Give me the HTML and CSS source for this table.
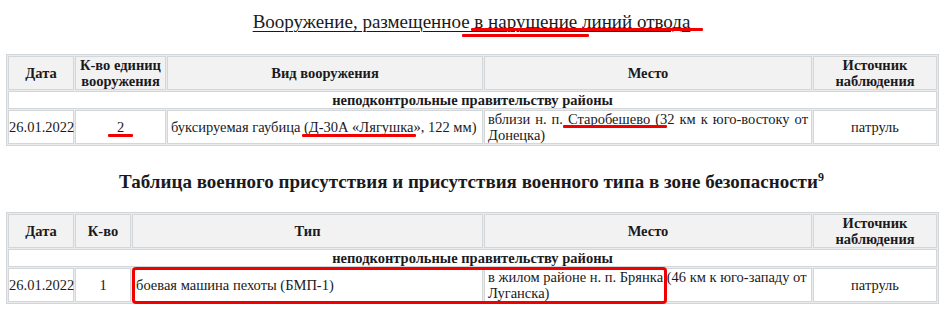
FILE: index.html
```html
<!DOCTYPE html>
<html lang="ru">
<head>
<meta charset="utf-8">
<link rel="stylesheet" href="styles.css">
</head>
<body>
<div class="page">
  <h2 class="title-1"><span class="ul">Вооружение, размещенное в нарушение линий отвода </span></h2>

  <table class="report report-1">
    <tr class="head">
      <th class="c-date">Дата</th>
      <th class="c-qty-1">К-во единиц вооружения</th>
      <th class="c-type-1">Вид вооружения</th>
      <th class="c-place">Место</th>
      <th class="c-src">Источник наблюдения</th>
    </tr>
    <tr class="sub">
      <th colspan="5">неподконтрольные правительству районы</th>
    </tr>
    <tr class="data">
      <td class="date">26.01.2022</td>
      <td class="center">2</td>
      <td>буксируемая гаубица (Д-30А «Лягушка», 122 мм)</td>
      <td class="justify">вблизи н. п. Старобешево (32 км к юго-востоку от Донецка)</td>
      <td class="center">патруль</td>
    </tr>
  </table>

  <h2 class="title-2">Таблица военного присутствия и присутствия военного типа в зоне безопасности<sup>9</sup></h2>

  <table class="report report-2">
    <tr class="head">
      <th class="c-date">Дата</th>
      <th class="c-qty-2">К-во</th>
      <th class="c-type-2">Тип</th>
      <th class="c-place">Место</th>
      <th class="c-src">Источник наблюдения</th>
    </tr>
    <tr class="sub">
      <th colspan="5">неподконтрольные правительству районы</th>
    </tr>
    <tr class="data">
      <td class="date">26.01.2022</td>
      <td class="center">1</td>
      <td>боевая машина пехоты (БМП-1)</td>
      <td>в жилом районе н. п. Брянка (46 км к юго-западу от Луганска)</td>
      <td class="center">патруль</td>
    </tr>
  </table>

  <div class="marks">
    <span class="mark m-title-a"></span>
    <span class="mark m-title-b"></span>
    <span class="mark m-qty"></span>
    <span class="mark m-gun"></span>
    <span class="mark m-place"></span>
    <span class="frame"></span>
  </div>
</div>
</body>
</html>
```

FILE: styles.css
```css
html, body {
  margin: 0;
  padding: 0;
  background: #ffffff;
}

body {
  font-family: "Liberation Serif", "Times New Roman", serif;
  color: #1a1a1c;
  font-size: 14.5px;
}

.page {
  position: relative;
  width: 943px;
  height: 312px;
  overflow: hidden;
}

.title-1 {
  margin: 11px 0 0 0;
  font-size: 19px;
  line-height: 22px;
  font-weight: normal;
  text-align: center;
}

.title-1 .ul {
  text-decoration: underline;
  text-decoration-thickness: 1px;
  text-underline-offset: 3px;
}

.title-2 {
  margin: 25px 0 0 0;
  font-size: 19px;
  line-height: 22px;
  font-weight: bold;
  text-align: center;
}

.title-2 sup {
  font-size: 12px;
  line-height: 0;
  vertical-align: 7px;
}

.report {
  margin-left: 6px;
  width: 933px;
  table-layout: fixed;
  border-collapse: separate;
  border-spacing: 1px;
  border: 1px solid #d2d6d9;
  background: #e9ebed;
}

.report-1 { margin-top: 21px; }
.report-2 { margin-top: 19px; }

.report th,
.report td {
  box-sizing: border-box;
  border: 1px solid #d3d7da;
  padding: 0 3px;
  line-height: 16px;
  background: #ffffff;
}

.report th {
  font-weight: bold;
  text-align: center;
  vertical-align: middle;
}

.report .head th {
  background: #f2f2f2;
  height: 34px;
}

.report .sub th {
  height: 18px;
  background: #ffffff;
}

.report .data td {
  height: 34px;
  vertical-align: middle;
  text-align: left;
}

.report td.center { text-align: center; }
.report td.justify { text-align: justify; }
.report td.date { padding: 0; text-align: center; }
.report .c-date { padding: 0; }

.c-date { width: 66px; }
.c-qty-1 { width: 91px; }
.c-type-1 { width: 316px; }
.c-qty-2 { width: 56px; }
.c-type-2 { width: 351px; }
.c-place { width: 328px; }
.c-src { width: 124px; }

/* red hand-drawn annotations laid over the document */
.marks {
  position: absolute;
  inset: 0;
  pointer-events: none;
}

.mark {
  position: absolute;
  height: 3px;
  background: #f20000;
  border-radius: 1px;
}

.m-title-a { left: 471px; top: 28px; width: 232px; }
.m-title-b { left: 462px; top: 34px; width: 127px; }
.m-qty { left: 108px; top: 134px; width: 25px; }
.m-gun { left: 302px; top: 134px; width: 114px; }
.m-place { left: 563px; top: 125px; width: 104px; }

.frame {
  position: absolute;
  left: 132px;
  top: 267px;
  width: 529px;
  height: 31px;
  border: 3px solid #f20000;
  border-radius: 4px;
}
```
